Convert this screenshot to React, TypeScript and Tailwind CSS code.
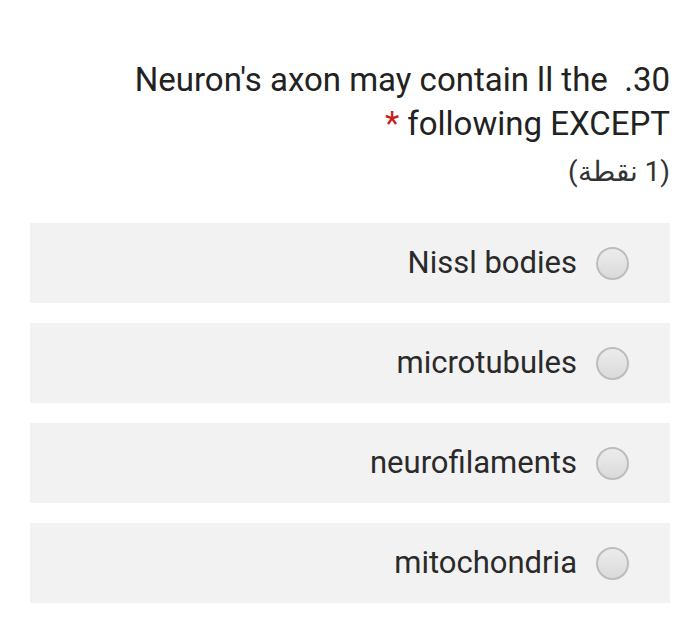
import React from "react";

const options = ["Nissl bodies", "microtubules", "neurofilaments", "mitochondria"];

function Radio() {
  return (
    <span className="block w-[33px] h-[33px] rounded-full border-2 border-[#bdbdbd] bg-gradient-to-b from-[#ececec] to-[#dadada] shrink-0" />
  );
}

export default function App() {
  return (
    <div className="w-[700px] h-[626px] bg-white px-[30px] pt-[58px]" style={{ fontFamily: "Roboto, 'Noto Sans', sans-serif" }}>
      <div dir="rtl" className="text-right text-[#222] text-[33px] leading-[44px]">
        <div className="whitespace-pre">{"30.  Neuron's axon may contain ll the"}</div>
        <div>
          following EXCEPT <span className="text-[#c5221f]">*</span>
        </div>
        <div className="mt-[6px] text-[28px] leading-[40px] text-[#333]">(1 نقطة)</div>
      </div>
      <div className="mt-[31px] flex flex-col gap-[20px]">
        {options.map((o) => (
          <div key={o} className="h-[80px] bg-[#f2f2f2] flex items-center justify-end pr-[41px] gap-[19px]">
            <span className="text-[31px] text-[#2a2a2a]">{o}</span>
            <Radio />
          </div>
        ))}
      </div>
    </div>
  );
}
